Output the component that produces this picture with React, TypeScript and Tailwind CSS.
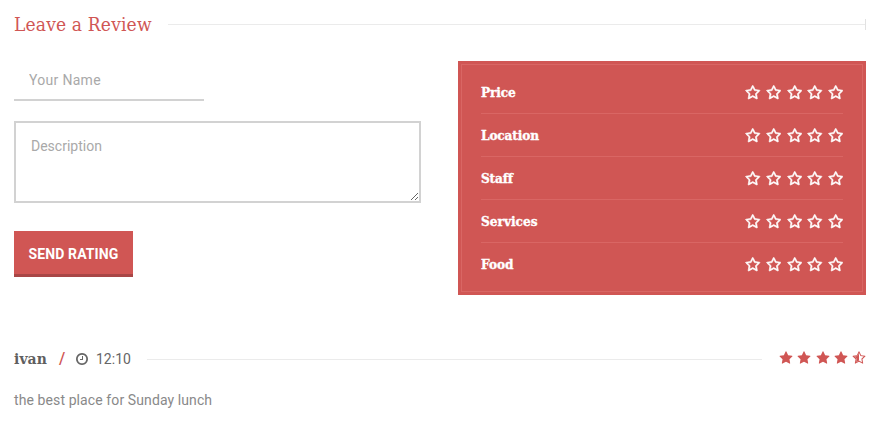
import { useState } from "react";

const STAR =
  "M1702 695l-363 354 86 500q1 7 1 20 0 21-10.5 35.5t-30.5 14.5q-19 0-40-12l-449-236-449 236q-22 12-40 12-21 0-31.5-14.5t-10.5-35.5q0-6 2-20l86-500-364-354q-25-27-25-48 0-37 56-46l502-73 225-455q19-41 49-41t49 41l225 455 502 73q56 9 56 46 0 22-26 48z";
const STAR_HOLE = "M1201 1004l306-297-422-62-189-382-189 382-422 62 306 297-73 421 378-199 377 199z";

const CATEGORIES = [
  { name: "Price", tracking: "tracking-[-0.15px]" },
  { name: "Location", tracking: "tracking-[-0.15px]" },
  { name: "Staff", tracking: "tracking-[-0.2px]" },
  { name: "Services", tracking: "tracking-[0px]" },
  { name: "Food", tracking: "tracking-[0px]" },
];

function Star({ fill, className }: { fill: "empty" | "half" | "full"; className: string }) {
  return (
    <svg viewBox="0 0 1792 1792" fill="currentColor" className={className}>
      <path fillRule="evenodd" d={fill === "full" ? STAR : STAR + STAR_HOLE} />
      {fill === "half" && <path d="M896 263L707 645l-422 62 306 297-73 421 378-199z" />}
    </svg>
  );
}

function Clock() {
  return (
    <svg viewBox="0 0 1792 1792" fill="currentColor" className="size-[14px]">
      <path d="M1024 544v448q0 14-9 23t-23 9h-320q-14 0-23-9t-9-23v-64q0-14 9-23t23-9h224v-352q0-14 9-23t23-9h64q14 0 23 9t9 23zm416 352q0-148-73-273t-198-198-273-73-273 73-198 198-73 273 73 273 198 198 273 73 273-73 198-198 73-273zm224 0q0 209-103 385.5t-279.5 279.5-385.5 103-385.5-103-279.5-279.5-103-385.5 103-385.5 279.5-279.5 385.5-103 385.5 103 279.5 279.5 103 385.5z" />
    </svg>
  );
}

function RatingRow({ name, tracking }: { name: string; tracking: string }) {
  const [rating, setRating] = useState(0);

  return (
    <div className="flex h-[43px] items-center justify-between border-b border-[#d96664] pt-px last:border-b-0 last:pt-0">
      <span className={`font-['DejaVu_Serif_Condensed','DejaVu_Serif',serif] text-[13.5px] font-bold [-webkit-text-stroke:0.35px_currentColor] ${tracking}`}>
        {name}
      </span>
      <div className="-mr-[0.5px] flex gap-[4.6px]">
        {[1, 2, 3, 4, 5].map((n) => (
          <button key={n} type="button" aria-label={`${name} ${n}`} onClick={() => setRating(n)}>
            <Star
              fill={n <= rating ? "full" : "empty"}
              className="mx-[0.25px] block size-[15.5px] stroke-current stroke-[75]"
            />
          </button>
        ))}
      </div>
    </div>
  );
}

export default function App() {
  return (
    <div className="h-[432px] w-[884px] bg-white pt-[11px] pr-[18px] pl-[14px] font-['Roboto',sans-serif] text-sm text-[#898989]">
      <header className="flex h-[27px] items-center">
        <h2 className="w-[154px] font-['DejaVu_Serif_Condensed','DejaVu_Serif',serif] text-[19px] whitespace-nowrap text-[#d05654] tracking-[0.17px]">
          Leave a Review
        </h2>
        <div className="h-px flex-1 bg-[#ebebeb]" />
        <div className="h-[11px] w-px bg-[#e2e2e2]" />
      </header>

      <div className="mt-[23px] flex justify-between">
        <form className="flex w-[407px] flex-col items-start" onSubmit={(e) => e.preventDefault()}>
          <input
            placeholder="Your Name"
            className="h-10 w-[190px] border-b-2 border-[#d2d2d2] px-[15px] tracking-[0.3px] outline-none placeholder:text-[#a9a9a9]"
          />
          <textarea
            placeholder="Description"
            className="mt-5 block h-[82px] w-full border-2 border-[#d2d2d2] px-[15px] py-[13px] outline-none placeholder:text-[#a9a9a9]"
          />
          <button className="mt-7 h-[46px] w-[119px] border-b-3 border-[#a84646] bg-[#d05654] pt-[3px] text-sm font-bold tracking-[0.1px] whitespace-nowrap text-white">
            SEND RATING
          </button>
        </form>

        <section className="h-[234px] w-[408px] bg-[#d05654] p-[3px] text-white">
          <div className="h-full border border-[#d96664] px-[19px] pt-[6px]">
            {CATEGORIES.map((c) => (
              <RatingRow key={c.name} name={c.name} tracking={c.tracking} />
            ))}
          </div>
        </section>
      </div>

      <article className="mt-[52px]">
        <div className="flex h-6 items-center">
          <span className="w-[45px] font-['DejaVu_Serif_Condensed','DejaVu_Serif',serif] text-[15.5px] font-bold text-[#5f5f5f] tracking-[0.1px]">ivan</span>
          <span className="w-[16px] text-base font-medium text-[#d05654]">/</span>
          <span className="flex w-[72px] items-center gap-[7px] text-[#666]">
            <Clock />
            12:10
          </span>
          <div className="h-px w-[615px] bg-[#ebebeb]" />
          <div className="mb-[2px] ml-auto flex gap-[4.2px] text-[#d05654]">
            {[1, 2, 3, 4, 5].map((n) => (
              <Star key={n} fill={n < 5 ? "full" : "half"} className="size-[14px]" />
            ))}
          </div>
        </div>
        <p className="mt-[19px] tracking-[0.1px]">the best place for Sunday lunch</p>
      </article>
    </div>
  );
}
